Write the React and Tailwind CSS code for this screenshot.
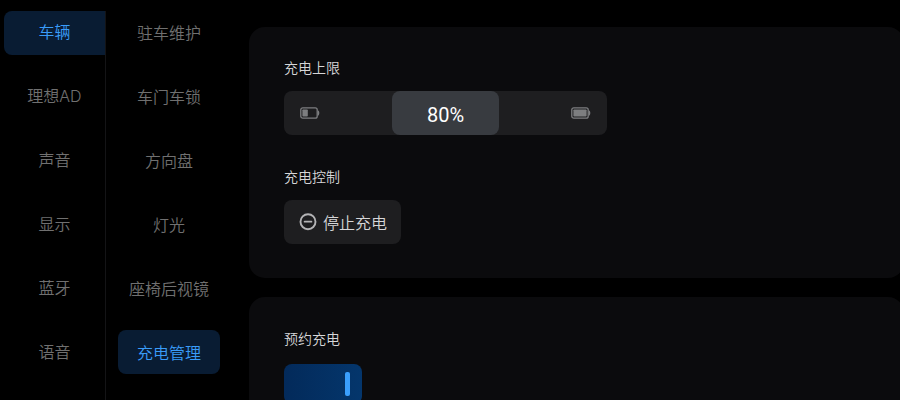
import { useState } from "react";

const mainTabs = ["车辆", "理想AD", "声音", "显示", "蓝牙", "语音"];
const subTabs = ["驻车维护", "车门车锁", "方向盘", "灯光", "座椅后视镜", "充电管理"];

const MIN_LIMIT = 60;
const MAX_LIMIT = 100;

const Battery = ({ full }) => (
  <svg viewBox="0 0 20 12" className="h-3 w-5" aria-hidden="true">
    <rect x="0.8" y="0.8" width="16.4" height="10.4" rx="2" fill="none" stroke="#7d7e80" strokeWidth="1.3" />
    <rect x="2.4" y="2.5" width={full ? 13.2 : 5.4} height="7" rx="0.8" fill="#7d7e80" />
    <path d="M17.8 3.2c1.1.3 1.5 1.5 1.5 2.8s-.4 2.5-1.5 2.8z" fill="#7d7e80" />
  </svg>
);

const StopIcon = () => (
  <svg viewBox="0 0 18 18" className="h-[18px] w-[18px]" fill="none" stroke="#b4b4b6" aria-hidden="true">
    <circle cx="9" cy="8.7" r="7.5" strokeWidth="1.9" />
    <path d="M5.6 8.7h6.8" strokeWidth="1.8" strokeLinecap="round" />
  </svg>
);

const App = () => {
  const [mainTab, setMainTab] = useState("车辆");
  const [subTab, setSubTab] = useState("充电管理");
  const [limit, setLimit] = useState(80);
  const [charging, setCharging] = useState(true);
  const [scheduled, setScheduled] = useState(true);

  const thumbLeft = ((limit - MIN_LIMIT) / (MAX_LIMIT - MIN_LIMIT)) * (200 / 3);

  return (
    <div className="flex h-screen overflow-hidden bg-black font-['Inter','Noto_Sans_CJK_SC',sans-serif] text-base font-[350] text-[#d6d6d8]">
      <nav className="mt-[11px] flex shrink-0 flex-col gap-5 border-r border-[#141416] pl-1">
        {mainTabs.map((tab) => (
          <button
            key={tab}
            onClick={() => setMainTab(tab)}
            className={`${mainTab === tab ? "bg-[#091c33] text-[#3a9cf9]" : "text-[#707070]"
              } h-11 w-[101px] shrink-0 rounded-l-lg pb-0.5`}
          >
            {tab}
          </button>
        ))}
      </nav>

      <nav className="flex shrink-0 flex-col gap-5 pt-[10px] pl-3">
        {subTabs.map((tab) => (
          <button
            key={tab}
            onClick={() => setSubTab(tab)}
            className={`${subTab === tab ? "bg-[#091c33] text-[#3a9cf9]" : "text-[#707070]"
              } h-11 w-[102px] shrink-0 rounded-lg pt-0.5`}
          >
            {tab}
          </button>
        ))}
      </nav>

      <main className="-mr-1 ml-[29px] flex flex-1 flex-col gap-[19px] pt-[27px]">
        <section className="rounded-2xl bg-[#0b0b0d] px-[35px] pt-[31px] pb-[34px]">
          <label htmlFor="limit" className="block text-sm leading-5">
            充电上限
          </label>
          <div className="relative mt-[13px] flex h-11 w-[323px] items-center justify-between rounded-lg bg-[#1e1e20] px-4">
            <Battery />
            <Battery full />
            <div
              className="absolute inset-y-0 flex w-1/3 items-center justify-center rounded-lg bg-[#383b40] pt-1 font-['Roboto',sans-serif] text-xl font-normal text-white"
              style={{ left: `${thumbLeft}%` }}
            >
              {limit}%
            </div>
            <input
              id="limit"
              type="range"
              min={MIN_LIMIT}
              max={MAX_LIMIT}
              value={limit}
              onChange={(e) => setLimit(Number(e.target.value))}
              className="absolute inset-0 h-full w-full cursor-pointer opacity-0"
            />
          </div>

          <h3 className="mt-8 text-sm leading-5">充电控制</h3>
          <button
            onClick={() => setCharging(!charging)}
            className="mt-[13px] flex h-11 items-center gap-[6px] rounded-lg bg-[#1e1e20] pr-[14px] pl-[15px]"
          >
            <StopIcon />
            <span className="pt-0.5">{charging ? "停止充电" : "开始充电"}</span>
          </button>
        </section>

        <section className="flex-1 rounded-t-2xl bg-[#0b0b0d] px-[35px] pt-8">
          <label htmlFor="schedule" className="block text-sm leading-5">
            预约充电
          </label>
          <div
            className={`${scheduled ? "justify-end bg-linear-to-r from-[#032a5a] to-[#04366c]" : "justify-start bg-[#1e1e20]"
              } relative mt-[15px] flex h-10 w-[78px] rounded-lg px-3 py-2`}
          >
            <span className={`${scheduled ? "bg-[#3a9ffd]" : "bg-[#7d7e80]"} h-full w-[5px] rounded-xs`}></span>
            <input
              id="schedule"
              type="checkbox"
              role="switch"
              checked={scheduled}
              onChange={(e) => setScheduled(e.target.checked)}
              className="absolute inset-0 h-full w-full cursor-pointer opacity-0"
            />
          </div>
        </section>
      </main>
    </div>
  );
};

export default App;
